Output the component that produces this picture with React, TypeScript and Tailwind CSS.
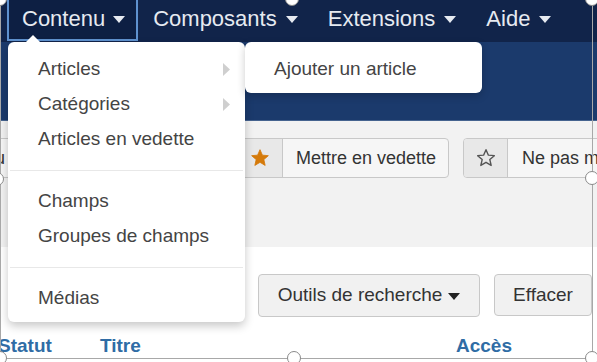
import React from "react";

function Caret({ className }: { className?: string }) {
    return (
        <svg width="12" height="7" viewBox="0 0 12 7" className={className}>
            <path d="M0 0h12L6 7z" fill="currentColor" />
        </svg>
    );
}

function NavItem({ label, active }: { label: string; active?: boolean }) {
    return (
        <div
            className={
                active
                    ? "flex items-center gap-[8px] h-[43px] -mt-[2px] pl-[13px] pr-[11px] pb-[3px] border-2 border-[#5f92cf] bg-[#0d1f43]"
                    : "flex items-center gap-[9px] h-[40px] px-[15px] pb-[3px]"
            }
        >
            <span>{label}</span>
            <Caret className="mt-[2px]" />
        </div>
    );
}

function Star({ filled }: { filled?: boolean }) {
    return (
        <svg width="20" height="20" viewBox="0 0 24 24">
            <path
                d="M12 2l2.9 6.6 7.1.6-5.4 4.7 1.6 7-6.2-3.7-6.2 3.7 1.6-7L2 9.2l7.1-.6z"
                fill={filled ? "#d57a0a" : "none"}
                stroke={filled ? "#d57a0a" : "#555"}
                strokeWidth={filled ? 1 : 1.7}
                strokeLinejoin="round"
            />
        </svg>
    );
}

function MenuItem({ label, sub }: { label: string; sub?: boolean }) {
    return (
        <div className="flex items-center justify-between h-[35px] pl-[30px] pr-[15px]">
            <span>{label}</span>
            {sub && (
                <svg width="7" height="13" viewBox="0 0 7 13">
                    <path d="M0 0l7 6.5L0 13z" fill="#cfcfcf" />
                </svg>
            )}
        </div>
    );
}

function Handle({ className }: { className: string }) {
    return <div className={"absolute w-[14px] h-[14px] rounded-full bg-white border border-[#8a8a8a] " + className} />;
}

export default function App() {
    return (
        <div className="relative w-[597px] h-[362px] overflow-hidden bg-white font-['Liberation_Sans',Arial,sans-serif]">
            {/* top menu */}
            <nav className="flex h-[42px] bg-[#11244a] pl-[7px] text-[22px] text-[#e6eaf1]">
                <NavItem label="Contenu" active />
                <NavItem label="Composants" />
                <NavItem label="Extensions" />
                <NavItem label="Aide" />
            </nav>
            <div className="h-[79px] bg-[#1b3a6c] border-b border-[#45638f]" />

            {/* toolbar */}
            <div className="h-[126px] bg-[#f2f2f2] pt-[17px]">
                <div className="flex gap-[14px] ml-[-82px] text-[18px] text-[#333]">
                    <div className="flex items-center justify-end w-[100px] h-[40px] pr-[12px] border border-[#c8c8c8] rounded bg-[#f6f6f6] shrink-0">
                        Nouveau
                    </div>
                    <div className="flex items-center w-[190px] h-[40px] px-[12px] border border-[#c8c8c8] rounded bg-[#f6f6f6] shrink-0">
                        Dépublier
                    </div>
                    <div className="flex w-[213px] h-[40px] border border-[#c8c8c8] rounded bg-[#f6f6f6] shrink-0 overflow-hidden">
                        <div className="flex items-center justify-center w-[46px] bg-[#e8e8e8] border-r border-[#c8c8c8]">
                            <Star filled />
                        </div>
                        <div className="flex items-center pl-[13px] whitespace-nowrap">Mettre en vedette</div>
                    </div>
                    <div className="flex h-[40px] border border-[#c8c8c8] rounded bg-[#f6f6f6] shrink-0 overflow-hidden">
                        <div className="flex items-center justify-center w-[44px] bg-[#e8e8e8] border-r border-[#c8c8c8]">
                            <Star />
                        </div>
                        <div className="flex items-center pl-[14px] pr-[14px] whitespace-nowrap">Ne pas mettre en vedette</div>
                    </div>
                </div>
            </div>

            {/* search tools */}
            <div className="flex justify-end gap-[14px] pr-[5px] pt-[27px] text-[19px] text-[#333]">
                <div className="flex items-center justify-center gap-[6px] w-[222px] h-[43px] border border-[#c8c8c8] rounded bg-[#f1f1f1]">
                    <span>Outils de recherche</span>
                    <Caret className="mt-[2px] text-[#222]" />
                </div>
                <div className="flex items-center justify-center w-[98px] h-[42px] border border-[#c8c8c8] rounded bg-[#f1f1f1]">
                    Effacer
                </div>
            </div>

            {/* table head */}
            <div className="grid grid-cols-[102px_356px_1fr] items-end ml-[-2px] mt-[16px] h-[26px] pb-[1px] border-b border-[#9a9a9a] text-[19px] font-bold text-[#2f6ca5] leading-[22px]">
                <span>Statut</span>
                <span>Titre</span>
                <span>Accès</span>
            </div>

            {/* Contenu dropdown */}
            <div className="absolute left-[8px] top-[42px] w-[237px] pt-[10px] pb-[6px] bg-white rounded-[6px] shadow-[0_4px_10px_rgba(0,0,0,0.22)] text-[19px] text-[#444]">
                <div className="absolute left-[18px] top-[-7px] w-0 h-0 border-x-[7px] border-x-transparent border-b-[7px] border-b-white" />
                <MenuItem label="Articles" sub />
                <MenuItem label="Catégories" sub />
                <MenuItem label="Articles en vedette" />
                <div className="mx-[2px] my-[13px] h-px bg-[#e8e8e8]" />
                <MenuItem label="Champs" />
                <MenuItem label="Groupes de champs" />
                <div className="mx-[2px] my-[13px] h-px bg-[#e8e8e8]" />
                <MenuItem label="Médias" />
            </div>

            {/* Articles submenu */}
            <div className="absolute left-[245px] top-[42px] w-[237px] h-[51px] flex items-center pl-[29px] pt-[3px] bg-white rounded-[6px] shadow-[0_3px_8px_rgba(0,0,0,0.2)] text-[19px] text-[#444]">
                Ajouter un article
            </div>

            {/* selection frame */}
            <div className="absolute left-0 top-0 w-[593px] h-[359px] border-l border-r border-b border-[#a8a8a8] pointer-events-none" />
            <Handle className="left-[-7px] top-[-8px]" />
            <Handle className="left-[285px] top-[-8px]" />
            <Handle className="left-[585px] top-[-8px]" />
            <Handle className="left-[-10px] top-[172px]" />
            <Handle className="left-[585px] top-[171px]" />
            <Handle className="left-[-7px] top-[351px]" />
            <Handle className="left-[287px] top-[351px]" />
            <Handle className="left-[585px] top-[351px]" />
        </div>
    );
}
